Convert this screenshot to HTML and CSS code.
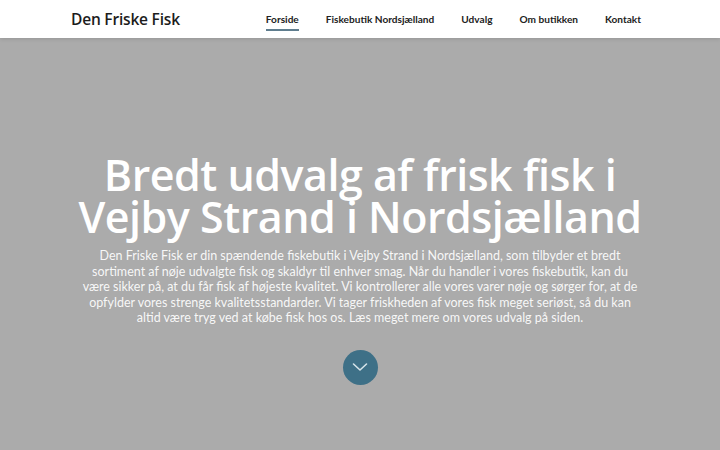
FILE: index.html
```html
<!DOCTYPE html>
<html lang="da">
<head>
    <meta charset="UTF-8">
    <meta name="viewport" content="width=device-width, initial-scale=1.0">
    <title>Den Friske Fisk</title>
    <link rel="stylesheet" href="styles.css">
</head>
<body>
    <header class="topbar">
        <div class="topbar-inner">
            <a class="logo" href="#">Den Friske Fisk</a>
            <nav class="menu">
                <a class="menu-link active" href="#">Forside</a>
                <a class="menu-link" href="#">Fiskebutik Nordsjælland</a>
                <a class="menu-link" href="#">Udvalg</a>
                <a class="menu-link" href="#">Om butikken</a>
                <a class="menu-link" href="#">Kontakt</a>
            </nav>
        </div>
    </header>

    <section class="hero">
        <h1 class="hero-title">Bredt udvalg af frisk fisk i<br>Vejby Strand i Nordsjælland</h1>
        <p class="hero-text">
            Den Friske Fisk er din spændende fiskebutik i Vejby Strand i Nordsjælland, som tilbyder et bredt<br>
            sortiment af nøje udvalgte fisk og skaldyr til enhver smag. Når du handler i vores fiskebutik, kan du<br>
            være sikker på, at du får fisk af højeste kvalitet. Vi kontrollerer alle vores varer nøje og sørger for, at de<br>
            opfylder vores strenge kvalitetsstandarder. Vi tager friskheden af vores fisk meget seriøst, så du kan<br>
            altid være tryg ved at købe fisk hos os. Læs meget mere om vores udvalg på siden.
        </p>
        <a class="scroll-down" href="#">
            <svg width="16" height="10" viewBox="0 0 16 10">
                <path d="M1.5 2 L8 8 L14.5 2" fill="none" stroke="#d6e4ea" stroke-width="1.6" stroke-linecap="round" stroke-linejoin="round"/>
            </svg>
        </a>
    </section>
</body>
</html>
```

FILE: styles.css
```css
body {
    margin: 0;
    padding: 0;
    font-family: 'Lato', sans-serif;
    background: #ababab;
    height: 450px;
    overflow: hidden;
}

/* Barre øverst */
.topbar {
    position: relative;
    z-index: 2;
    height: 38px;
    background: #fff;
    box-shadow: 0 1px 4px rgba(0,0,0,0.12);
}

.topbar-inner {
    height: 100%;
    padding: 0 79px 0 71px;
    display: flex;
    align-items: center;
    justify-content: space-between;
}

.logo {
    font-family: 'Open Sans', sans-serif;
    font-size: 15.5px;
    font-weight: 600;
    color: #1c1c1c;
    text-decoration: none;
    letter-spacing: -0.2px;
}

.menu {
    display: flex;
    gap: 27px;
}

.menu-link {
    position: relative;
    font-family: 'Lato', sans-serif;
    font-size: 10.1px;
    font-weight: 700;
    color: #222;
    text-decoration: none;
    padding: 4px 0;
}

.menu-link.active::after {
    content: '';
    position: absolute;
    left: 0;
    right: 0;
    bottom: -2px;
    height: 2px;
    background: #5f7d8e;
}

/* Forsidens hero */
.hero {
    height: 412px;
    display: flex;
    flex-direction: column;
    align-items: center;
    text-align: center;
    color: #fff;
    padding-top: 116px;
    box-sizing: border-box;
}

.hero-title {
    font-family: 'Open Sans', sans-serif;
    font-weight: 600;
    font-size: 43px;
    line-height: 42px;
    letter-spacing: -0.5px;
    margin: 0;
}

.hero-text {
    font-family: 'Lato', sans-serif;
    font-size: 12.5px;
    line-height: 15.6px;
    color: rgba(255,255,255,0.92);
    white-space: nowrap;
    margin: 10px 0 0;
}

.scroll-down {
    margin-top: 24px;
    width: 35px;
    height: 35px;
    border-radius: 50%;
    background: #3e7087;
    display: flex;
    justify-content: center;
    align-items: center;
}
```
